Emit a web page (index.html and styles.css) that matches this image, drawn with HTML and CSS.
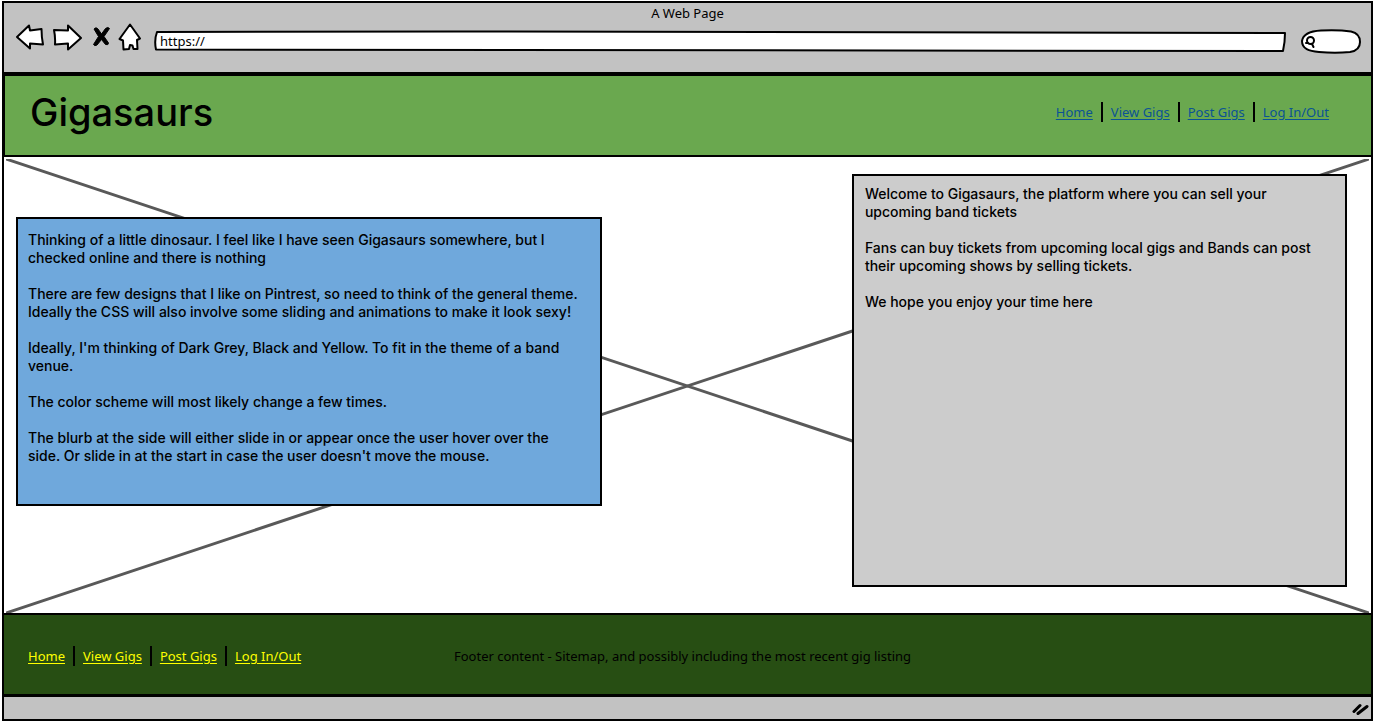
FILE: index.html
```html
<!DOCTYPE html>
<html lang="en">
<head>
<meta charset="utf-8">
<meta name="viewport" content="width=device-width, initial-scale=1">
<title>A Web Page</title>
<link rel="stylesheet" href="styles.css">
</head>
<body>
<div class="browser">
  <div class="chrome">
    <div class="chrome-title">A Web Page</div>
    <div class="toolbar">
      <div class="tools">
        <button class="tool" type="button" aria-label="Back">
          <svg width="30" height="28" viewBox="0 0 30 28"><path d="M2 14 L14 2.500 L15 7.500 L26.500 6 Q26.500 14 28 21.500 L15 20.500 L15 25.500 Z"/></svg>
        </button>
        <button class="tool" type="button" aria-label="Forward">
          <svg width="30" height="28" viewBox="0 0 30 28"><path d="M29 15 L16 2.500 L16 7.500 L2 7 Q3.500 14 3 21.500 L16 20.500 L16 26.500 Z"/></svg>
        </button>
        <button class="tool tool-stop" type="button" aria-label="Stop">
          <svg width="18" height="22" viewBox="0 0 18 22"><path class="cross-mark" d="M2 3 Q4 .5 6 3 L9.500 8 L13.500 2.500 Q16 .5 17.500 2.500 L12 10.500 L16.500 17 Q16.500 19.500 13.500 18.500 L9.500 13.500 L5 19 Q2.500 20.500 1.500 18.500 L6.500 10.500 Z"/></svg>
        </button>
        <button class="tool" type="button" aria-label="Home page">
          <svg width="24" height="28" viewBox="0 0 24 28"><path d="M13 1.500 L23 15.500 L20 17 L20.500 26 L16.500 26 L15.500 22.500 L13 22 L12 26 L6.500 26.500 L6 17.500 L2.500 16 Z"/></svg>
        </button>
      </div>
      <div class="sketch-field address">
        <svg class="outline" viewBox="0 0 1132 22" preserveAspectRatio="none" aria-hidden="true"><path d="M3 2 L300 1.500 L1131 3 Q1131 12 1129 21 L2 19.500 Q0 10 3 2 Z"/></svg>
        <input type="text" aria-label="Address" value="https://">
      </div>
      <div class="sketch-field search">
        <svg class="outline" viewBox="0 0 60 25" preserveAspectRatio="none" aria-hidden="true"><path d="M1 12 C2 5 11 2 20 1.500 C30 1 40 1 50 2.500 C57 4 59 8 59 13 C59 19 56 22 49 23 C40 24 28 24 18 23 C8 22 1 20 1 12 Z"/></svg>
        <svg class="lens" width="12" height="14" viewBox="0 0 12 14" aria-hidden="true"><circle cx="6.500" cy="5.500" r="3.500"/><path d="M4 8 L2 8 M8 9 L9.500 12"/></svg>
        <input type="text" aria-label="Search">
      </div>
    </div>
  </div>

  <header class="site-header">
    <h1>Gigasaurs</h1>
    <nav class="links" aria-label="Main">
      <a href="#home">Home</a>
      <a href="#view">View Gigs</a>
      <a href="#post">Post Gigs</a>
      <a href="#login">Log In/Out</a>
    </nav>
  </header>

  <main class="hero">
    <svg class="cross" viewBox="0 0 100 100" preserveAspectRatio="none" aria-hidden="true"><path d="M0 0 L100 100 M100 0 L0 100"/></svg>
    <section class="note">
      <p>Thinking of a little dinosaur. I feel like I have seen Gigasaurs somewhere, but I<br>checked online and there is nothing</p>
      <p>There are few designs that I like on Pintrest, so need to think of the general theme.<br>Ideally the CSS will also involve some sliding and animations to make it look sexy!</p>
      <p>Ideally, I'm thinking of Dark Grey, Black and Yellow. To fit in the theme of a band<br>venue.</p>
      <p>The color scheme will most likely change a few times.</p>
      <p>The blurb at the side will either slide in or appear once the user hover over the<br>side. Or slide in at the start in case the user doesn't move the mouse.</p>
    </section>
    <section class="welcome">
      <p>Welcome to Gigasaurs, the platform where you can sell your<br>upcoming band tickets</p>
      <p>Fans can buy tickets from upcoming local gigs and Bands can post<br>their upcoming shows by selling tickets.</p>
      <p>We hope you enjoy your time here</p>
    </section>
  </main>

  <footer class="site-footer">
    <nav class="links links-footer" aria-label="Footer">
      <a href="#home">Home</a>
      <a href="#view">View Gigs</a>
      <a href="#post">Post Gigs</a>
      <a href="#login">Log In/Out</a>
    </nav>
    <p>Footer content - Sitemap, and possibly including the most recent gig listing</p>
  </footer>

  <div class="status-bar">
    <svg width="18" height="16" viewBox="0 0 18 16" aria-hidden="true"><path d="M3 10.500 L9 4.500 M7 12.500 L16 5.500"/></svg>
  </div>
</div>
</body>
</html>
```
FILE: styles.css
```css
* {
  box-sizing: border-box;
}

body {
  margin: 0;
  background: #fff;
  color: #000;
  font-family: "Noto Sans", "Liberation Sans", sans-serif;
  font-size: 13px;
  line-height: 18px;
}

h1,
p {
  margin: 0;
}

.browser {
  display: flex;
  flex-direction: column;
  min-height: calc(100vh - 2px);
  padding: 1px 1px 0 2px;
}

.chrome {
  height: 71px;
  padding-top: 1px;
  border: 2px solid #000;
  border-bottom: 0;
  background: #c2c2c2;
}

.chrome-title {
  text-align: center;
}

.toolbar {
  display: flex;
  align-items: flex-start;
  padding: 0 10px 0 11px;
}

.tools {
  display: flex;
  align-items: center;
  gap: 7px;
  width: 139px;
  height: 30px;
}

.tool {
  display: block;
  flex: none;
  padding: 0;
  border: 0;
  background: none;
  line-height: 0;
}

.tool-stop {
  margin-left: 3px;
}

.tool path {
  fill: #fff;
  stroke: #000;
  stroke-width: 2;
  stroke-linejoin: round;
}

.tool .cross-mark {
  fill: #000;
  stroke-width: 1;
}

.sketch-field {
  position: relative;
  display: flex;
  align-items: center;
}

.address {
  flex: 1;
  height: 22px;
  margin-top: 8px;
}

.search {
  width: 60px;
  height: 25px;
  margin-top: 7px;
  margin-left: 15px;
}

.outline {
  position: absolute;
  inset: 0;
  width: 100%;
  height: 100%;
  overflow: visible;
}

.outline path {
  fill: #fff;
  stroke: #000;
  stroke-width: 2;
  stroke-linejoin: round;
  vector-effect: non-scaling-stroke;
}

.lens {
  position: relative;
  flex: none;
  margin-left: 3px;
  fill: none;
  stroke: #000;
  stroke-width: 2;
  stroke-linecap: round;
}

.sketch-field input {
  position: relative;
  flex: 1;
  min-width: 0;
  height: 18px;
  padding: 0 6px;
  border: 0;
  outline: 0;
  background: none;
  color: #000;
  font: inherit;
}

.site-header {
  display: flex;
  align-items: center;
  justify-content: space-between;
  height: 85px;
  padding: 0 42px 8px 25px;
  border: 3px solid #000;
  border-width: 4px 2px 2px 3px;
  background: #6aa84f;
}

h1 {
  font-family: Inter, sans-serif;
  font-size: 38px;
  font-weight: 500;
  line-height: 46px;
}

.links {
  display: flex;
  align-items: center;
}

.links a {
  display: flex;
  align-items: center;
  color: #0b5394;
  text-underline-offset: 2px;
}

.links a + a::before {
  content: "";
  width: 2px;
  height: 20px;
  margin: 0 8px;
  background: #000;
}

.links-footer a {
  color: #ff0;
}

.hero {
  position: relative;
  display: flex;
  flex: 1;
  align-items: flex-start;
  justify-content: space-between;
  padding: 17px 24px 26px 12px;
  border: solid #000;
  border-width: 0 2px;
  font-family: Inter, sans-serif;
  font-size: 14px;
  font-weight: 500;
}

.cross {
  position: absolute;
  inset: 2px 2px 0;
  width: calc(100% - 4px);
  height: calc(100% - 2px);
}

.cross path {
  fill: none;
  stroke: #595959;
  stroke-width: 3;
  vector-effect: non-scaling-stroke;
}

.note,
.welcome {
  position: relative;
  border: 2px solid #000;
}

.note p + p,
.welcome p + p {
  margin-top: 18px;
}

.note {
  width: 44%;
  min-height: 289px;
  margin-top: 43px;
  padding: 12px 0 12px 10px;
  background: #6fa8dc;
}

.welcome {
  align-self: stretch;
  width: 37.2%;
  padding: 9px 0 9px 11px;
  background: #ccc;
}

.site-footer {
  display: grid;
  grid-template-columns: 1fr auto 1fr;
  align-items: center;
  height: 84px;
  padding: 3px 34px 0 24px;
  border: solid #000;
  border-width: 2px 2px 3px;
  background: #274e13;
}

.status-bar {
  display: flex;
  align-items: center;
  justify-content: flex-end;
  height: 24px;
  padding: 2px 2px 0;
  border: 2px solid #000;
  border-top: 0;
  background: #c2c2c2;
}

.status-bar path {
  fill: none;
  stroke: #000;
  stroke-width: 3;
  stroke-linecap: round;
}
```
